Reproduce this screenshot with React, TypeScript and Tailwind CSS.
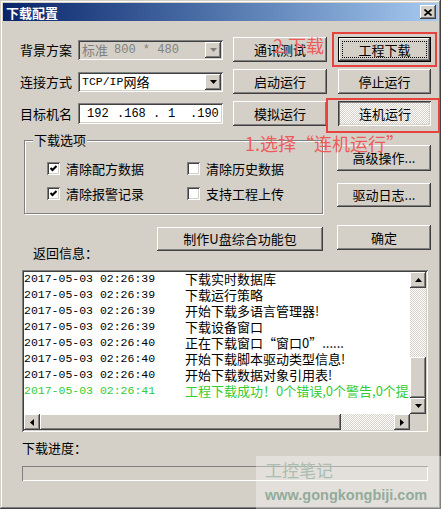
import type { ReactNode } from "react";

const raised =
  "shadow-[inset_-1px_-1px_#404040,inset_1px_1px_#ffffff,inset_-2px_-2px_#808080,inset_2px_2px_#d4d0c8]";
const sunken =
  "shadow-[inset_1px_1px_#808080,inset_-1px_-1px_#ffffff,inset_2px_2px_#404040,inset_-2px_-2px_#d4d0c8]";
const pressed =
  "shadow-[inset_1px_1px_#404040,inset_-1px_-1px_#ffffff,inset_2px_2px_#808080,inset_-2px_-2px_#d4d0c8]";
const hatch =
  "bg-[image:repeating-conic-gradient(#ffffff_0_25%,#d4d0c8_0_50%)] bg-size-[2px_2px]";
const mono = "font-['Liberation_Mono',monospace] text-[11.5px]";

const LOG = [
  { time: "2017-05-03 02:26:39", msg: "下载实时数据库" },
  { time: "2017-05-03 02:26:39", msg: "下载运行策略" },
  { time: "2017-05-03 02:26:39", msg: "开始下载多语言管理器!" },
  { time: "2017-05-03 02:26:39", msg: "下载设备窗口" },
  { time: "2017-05-03 02:26:40", msg: "正在下载窗口“窗口0”......" },
  { time: "2017-05-03 02:26:40", msg: "开始下载脚本驱动类型信息!" },
  { time: "2017-05-03 02:26:40", msg: "开始下载数据对象引用表!" },
  { time: "2017-05-03 02:26:41", msg: "工程下载成功！0个错误,0个警告,0个提示信息", ok: true },
];

function Btn({ children, className = "" }: { children: ReactNode; className?: string }) {
  return (
    <div
      className={`flex items-center justify-center bg-[#d4d0c8] text-[13px] leading-[16px] ${raised} ${className}`}
    >
      {children}
    </div>
  );
}

function Arrow({ dir, color = "#000" }: { dir: "up" | "down" | "left" | "right"; color?: string }) {
  const d = {
    down: "M0 0h7L3.5 4z",
    up: "M0 4h7L3.5 0z",
    left: "M4 0v7L0 3.5z",
    right: "M0 0v7L4 3.5z",
  }[dir];
  const vertical = dir === "up" || dir === "down";
  return (
    <svg width={vertical ? 7 : 4} height={vertical ? 4 : 7} viewBox={vertical ? "0 0 7 4" : "0 0 4 7"}>
      <path d={d} fill={color} />
    </svg>
  );
}

function Combo({ disabled, children }: { disabled?: boolean; children: ReactNode }) {
  return (
    <div
      className={`flex h-[20px] w-[145px] items-center pl-[4px] pr-[2px] ${sunken} ${
        disabled ? "bg-[#d4d0c8] text-[#808080]" : "bg-white text-black"
      }`}
    >
      <div className="flex flex-1 items-center whitespace-nowrap">{children}</div>
      <div className={`flex h-[16px] w-[16px] items-center justify-center bg-[#d4d0c8] ${raised}`}>
        <Arrow dir="down" color={disabled ? "#808080" : "#000"} />
      </div>
    </div>
  );
}

function Check({ checked, label }: { checked?: boolean; label: string }) {
  return (
    <div className="flex h-[13px] items-center gap-[6px]">
      <div className={`flex h-[13px] w-[13px] shrink-0 items-center justify-center bg-white ${sunken}`}>
        {checked && (
          <svg width="7" height="7" viewBox="0 0 7 7">
            <path d="M0.5 3l2 2 4-4" stroke="#000" strokeWidth="2" fill="none" />
          </svg>
        )}
      </div>
      <span className="whitespace-nowrap">{label}</span>
    </div>
  );
}

export default function App() {
  return (
    <div
      className={`relative flex h-[509px] w-[441px] flex-col overflow-hidden bg-[#d4d0c8] p-[3px] font-['Noto_Sans_CJK_SC',sans-serif] text-[13px] leading-[16px] text-black shadow-[inset_-1px_-1px_#404040,inset_1px_1px_#d4d0c8,inset_-2px_-2px_#808080,inset_2px_2px_#ffffff]`}
    >
      {/* title bar */}
      <div className="flex h-[18px] shrink-0 items-center bg-linear-to-r from-[#0a246a] to-[#a6caf0] pl-[3px] pr-[2px]">
        <span className="text-[13px] font-bold leading-none text-white">下载配置</span>
        <div className={`ml-auto flex h-[14px] w-[16px] items-center justify-center bg-[#d4d0c8] ${raised}`}>
          <svg width="8" height="7" viewBox="0 0 8 7">
            <path d="M0.5 0.5l7 6M7.5 0.5l-7 6" stroke="#000" strokeWidth="1.6" />
          </svg>
        </div>
      </div>

      <div className="flex flex-col pl-[17px]">
        {/* top fields + buttons */}
        <div className="mt-[16px] grid grid-cols-[58px_155px_105px_93px] grid-rows-[25px_25px_25px] items-center gap-y-[7px]">
          <span>背景方案</span>
          <Combo disabled>
            <span>标准</span>
            <span className={`${mono} ml-[6px] text-[12px]`}>800 * 480</span>
          </Combo>
          <div className="relative h-full w-[94px]">
            <Btn className="h-full w-full">通讯测试</Btn>
            <span className="absolute -top-[2px] left-[40px] whitespace-nowrap text-[18px] leading-[20px] text-[#ef5b5b]">
              2.下载
            </span>
          </div>
          <div className="relative h-full w-[93px]">
            <div className="h-full w-full border border-black bg-[#d4d0c8]">
              <div className={`relative flex h-full w-full items-center justify-center ${raised}`}>
                <div className="absolute inset-[3px] border border-dotted border-black" />
                工程下载
              </div>
            </div>
            <div className="pointer-events-none absolute -bottom-[5px] -left-[6px] -right-[6px] -top-[5px] border-2 border-[#e8423f]" />
          </div>

          <span>连接方式</span>
          <Combo>
            <span className={mono}>TCP/IP</span>
            <span>网络</span>
          </Combo>
          <Btn className="h-full w-[94px]">启动运行</Btn>
          <Btn className="h-full w-[93px]">停止运行</Btn>

          <span>目标机名</span>
          <div className={`flex h-[21px] w-[145px] items-center bg-white pl-[9px] ${sunken} ${mono} text-[12px]`}>
            <span className="w-[30px]">192</span>
            <span className="w-[36px]">.168</span>
            <span className="w-[15px]">.</span>
            <span className="w-[22px]">1</span>
            <span>.190</span>
          </div>
          <Btn className="h-full w-[94px]">模拟运行</Btn>
          <div className="relative h-full w-[93px]">
            <div className={`flex h-full w-full items-center justify-center pl-px pt-px ${hatch} ${pressed}`}>
              连机运行
            </div>
            <div className="pointer-events-none absolute -bottom-[7px] -left-[12px] -right-[9px] -top-[3px] border-2 border-[#e8423f]" />
          </div>
        </div>

        {/* options + side buttons */}
        <div className="relative ml-[4px] mt-[14px] grid grid-cols-[299px_94px] items-start gap-x-[14px]">
          <div className="flex flex-col">
            <div className="relative h-[74px] border border-[#808080] shadow-[inset_1px_1px_#ffffff,1px_1px_#ffffff]">
              <span className="absolute -top-[9px] left-[8px] bg-[#d4d0c8] px-px">下载选项</span>
              <div className="grid grid-cols-[140px_1fr] gap-y-[12px] pl-[22px] pt-[21px]">
                <Check checked label="清除配方数据" />
                <Check label="清除历史数据" />
                <Check checked label="清除报警记录" />
                <Check label="支持工程上传" />
              </div>
            </div>
            <div className="mt-[13px] flex items-start">
              <span className="ml-[9px] mt-[18px]">返回信息：</span>
              <Btn className="ml-auto h-[24px] w-[166px]">制作U盘综合功能包</Btn>
            </div>
          </div>
          <div className="flex flex-col">
            <Btn className="mt-[5px] h-[26px] w-[94px]">高级操作...</Btn>
            <Btn className="mt-[12px] h-[24px] w-[94px]">驱动日志...</Btn>
            <Btn className="mt-[18px] h-[25px] w-[94px]">确定</Btn>
          </div>
          <span className="absolute -top-[7px] left-[221px] whitespace-nowrap text-[18px] leading-[20px] text-[#ef5b5b]">
            1.选择“连机运行”
          </span>
        </div>

        {/* log list */}
        <div className={`ml-[2px] mt-[9px] h-[162px] w-[406px] bg-white p-[2px] ${sunken}`}>
          <div className="grid h-full grid-cols-[1fr_16px] grid-rows-[1fr_16px]">
            <div className="-mt-px overflow-hidden">
              {LOG.map((row, i) => (
                <div
                  key={i}
                  className={`flex h-[16px] items-center whitespace-nowrap ${
                    row.ok ? "text-[#33cc33]" : "text-black"
                  }`}
                >
                  <span className={`${mono} w-[161px] shrink-0`}>{row.time}</span>
                  <span>{row.msg}</span>
                </div>
              ))}
            </div>
            <div className="flex flex-col">
              <div className={`flex h-[16px] items-center justify-center bg-[#d4d0c8] ${raised}`}>
                <Arrow dir="up" />
              </div>
              <div className={`h-[69px] ${hatch}`} />
              <div className={`flex-1 bg-[#d4d0c8] ${raised}`} />
              <div className={`flex h-[16px] items-center justify-center bg-[#d4d0c8] ${raised}`}>
                <Arrow dir="down" />
              </div>
            </div>
            <div className="flex">
              <div className={`flex w-[16px] items-center justify-center bg-[#d4d0c8] ${raised}`}>
                <Arrow dir="left" />
              </div>
              <div className={`flex-1 bg-[#d4d0c8] ${raised}`} />
              <div className={`w-[53px] ${hatch}`} />
              <div className={`flex w-[16px] items-center justify-center bg-[#d4d0c8] ${raised}`}>
                <Arrow dir="right" />
              </div>
            </div>
            <div className="bg-[#d4d0c8]" />
          </div>
        </div>

        <span className="ml-[2px] mt-[8px]">下载进度：</span>
        <div className="ml-[2px] mt-[10px] h-[15px] w-[406px] shadow-[inset_1px_1px_#808080,inset_-1px_-1px_#ffffff]" />
      </div>

      {/* watermark */}
      <div className="absolute bottom-0 right-0 flex h-[53px] w-[185px] flex-col bg-white/35 pl-[9px] pt-[4px]">
        <span className="text-[17px] leading-[20px] text-[#a9bdb0]">工控笔记</span>
        <span className="mt-[6px] font-['Liberation_Sans',sans-serif] text-[14.5px] font-bold leading-[18px] text-[#93ab9c]">
          www.gongkongbiji.com
        </span>
      </div>
    </div>
  );
}
